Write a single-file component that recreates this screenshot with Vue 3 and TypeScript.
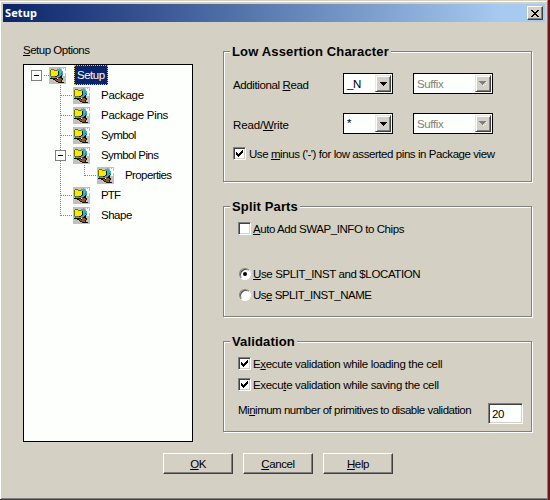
<script setup lang="ts">
import { ref } from 'vue'

interface TreeRow {
  label: string
  level: number
  spacing: string
  expander?: boolean
}

const rows: TreeRow[] = [
  { label: 'Setup', level: 0, spacing: 'tight', expander: true },
  { label: 'Package', level: 1, spacing: 'loose' },
  { label: 'Package Pins', level: 1, spacing: 'loose' },
  { label: 'Symbol', level: 1, spacing: 'tighter' },
  { label: 'Symbol Pins', level: 1, spacing: 'tighter', expander: true },
  { label: 'Properties', level: 2, spacing: 'tighter' },
  { label: 'PTF', level: 1, spacing: 'tightest' },
  { label: 'Shape', level: 1, spacing: 'tight' },
]

const selected = ref('Setup')
const swapInfo = ref(false)
const useMinus = ref(true)
const checkLoad = ref(true)
const checkSave = ref(true)
const splitMode = ref<'inst' | 'name'>('inst')

const palette: Record<string, string> = {
  K: '#15150c',
  O: '#787008',
  Y: '#f4ec08',
  T: '#38b4b4',
  D: '#187078',
  W: '#ffffff',
  B: '#806028',
  R: '#c03848',
}

const bitmap = [
  '.................',
  '..........T..W.W.',
  '..OOO...TTTT.WWW.',
  '.OYYYOOOTTTTTWWW.',
  '.OYYYYYYYKTTTTWWW',
  '.OYYYYYYYKTTTTWWW',
  '.OYYYYYYYKTTDTWW.',
  '.OYYYYYYYKTTTDWW.',
  '.OYYYYYYKDTTK.WW.',
  '.TOOOOKKTTTKK....',
  '..DTTTTTTDKKK....',
  '.KKKKKKKWRRBKK...',
  '....KKBBKBBBBK...',
  '......KBBBBBK....',
  '.......KKBBBK....',
  '.........KKKKKK..',
  '.................',
]

const pixels = bitmap.flatMap((line, y) =>
  [...line].flatMap((c, x) => (c === '.' ? [] : [{ x, y, fill: palette[c] }])),
)
</script>

<template>
  <div class="dialog">
    <header class="titlebar">
      <span>Setup</span>
      <button class="close" aria-label="Close">
        <svg width="8" height="7" shape-rendering="crispEdges">
          <path d="M0 0h2v1h1v1h2v-1h1v-1h2v1h-1v1h-1v1h-1v1h1v1h1v1h1v1h-2v-1h-1v-1h-2v1h-1v1h-2v-1h1v-1h1v-1h1v-1h-1v-1h-1v-1h-1z" />
        </svg>
      </button>
    </header>

    <main class="content">
      <section class="options">
        <div class="caption tight"><u>S</u>etup Options</div>
        <div class="tree">
          <svg class="lines" width="80" height="160" shape-rendering="crispEdges">
            <path d="M19.5 10.5H25M36.5 20V151M37 30.5H48M37 50.5H48M37 70.5H48M44 90.5H48M60.5 100V111M61 110.5H72M37 130.5H48M37 150.5H48" />
          </svg>
          <div v-for="row in rows" :key="row.label" class="row" :class="'level' + row.level">
            <span class="slot">
              <svg v-if="row.expander" class="expander" width="11" height="11" shape-rendering="crispEdges">
                <rect x=".5" y=".5" width="10" height="10" fill="#fff" stroke="#808080" />
                <path d="M3 5.5h5" stroke="#000" />
              </svg>
            </span>
            <svg class="icon" width="17" height="17" shape-rendering="crispEdges">
              <rect width="17" height="17" fill="#c0c0c0" />
              <rect v-for="p in pixels" :key="p.x + '-' + p.y" :x="p.x" :y="p.y" width="1" height="1" :fill="p.fill" />
            </svg>
            <span class="name" :class="[row.spacing, { selected: row.label === selected }]" @click="selected = row.label">{{ row.label }}</span>
          </div>
        </div>
      </section>

      <div class="groups">
        <section class="group assertion">
          <h2>Low Assertion Character</h2>
          <div class="pair">
            <span class="label">Additional <u>R</u>ead</span>
            <div class="combo"><span>_N</span><i class="drop"><svg width="7" height="4" shape-rendering="crispEdges"><path d="M0 0h7v1h-1v1h-1v1h-1v1h-1v-1h-1v-1h-1v-1h-1z" /></svg></i></div>
            <div class="combo wide"><span>Suffix</span><i class="drop"><svg width="8" height="5" shape-rendering="crispEdges"><path fill="#fff" d="M7 1h1v1h-1v1h-1v1h-1v1h-1v-1h3z" /><path fill="#808080" d="M0 0h7v1h-1v1h-1v1h-1v1h-1v-1h-1v-1h-1v-1h-1z" /></svg></i></div>
          </div>
          <div class="pair">
            <span class="label looser">Read/<u>W</u>rite</span>
            <div class="combo"><span class="star">*</span><i class="drop"><svg width="7" height="4" shape-rendering="crispEdges"><path d="M0 0h7v1h-1v1h-1v1h-1v1h-1v-1h-1v-1h-1v-1h-1z" /></svg></i></div>
            <div class="combo wide"><span>Suffix</span><i class="drop"><svg width="8" height="5" shape-rendering="crispEdges"><path fill="#fff" d="M7 1h1v1h-1v1h-1v1h-1v1h-1v-1h3z" /><path fill="#808080" d="M0 0h7v1h-1v1h-1v1h-1v1h-1v-1h-1v-1h-1v-1h-1z" /></svg></i></div>
          </div>
          <div class="check" @click="useMinus = !useMinus">
            <i class="box"><svg v-if="useMinus" width="7" height="7" shape-rendering="crispEdges"><path d="M0 2h1v1h1v1h1v-1h1v-1h1v-1h1v-1h1v3h-1v1h-1v1h-1v1h-1v1h-1v-1h-1v-1h-1z" /></svg></i>
            <span class="snug">Use <u>m</u>inus ('-') for low asserted pins in Package view</span>
          </div>
        </section>

        <section class="group split">
          <h2>Split Parts</h2>
          <div class="check" @click="swapInfo = !swapInfo">
            <i class="box"><svg v-if="swapInfo" width="7" height="7" shape-rendering="crispEdges"><path d="M0 2h1v1h1v1h1v-1h1v-1h1v-1h1v-1h1v3h-1v1h-1v1h-1v1h-1v1h-1v-1h-1v-1h-1z" /></svg></i>
            <span class="snug"><u>A</u>uto Add SWAP_INFO to Chips</span>
          </div>
          <div class="check radio first" @click="splitMode = 'inst'">
            <i class="dot" :class="{ on: splitMode === 'inst' }"></i>
            <span><u>U</u>se SPLIT_INST and $LOCATION</span>
          </div>
          <div class="check radio" @click="splitMode = 'name'">
            <i class="dot" :class="{ on: splitMode === 'name' }"></i>
            <span class="tight">Us<u>e</u> SPLIT_INST_NAME</span>
          </div>
        </section>

        <section class="group validation">
          <h2>Validation</h2>
          <div class="check" @click="checkLoad = !checkLoad">
            <i class="box"><svg v-if="checkLoad" width="7" height="7" shape-rendering="crispEdges"><path d="M0 2h1v1h1v1h1v-1h1v-1h1v-1h1v-1h1v3h-1v1h-1v1h-1v1h-1v1h-1v-1h-1v-1h-1z" /></svg></i>
            <span class="even">E<u>x</u>ecute validation while loading the cell</span>
          </div>
          <div class="check" @click="checkSave = !checkSave">
            <i class="box"><svg v-if="checkSave" width="7" height="7" shape-rendering="crispEdges"><path d="M0 2h1v1h1v1h1v-1h1v-1h1v-1h1v-1h1v3h-1v1h-1v1h-1v1h-1v1h-1v-1h-1v-1h-1z" /></svg></i>
            <span class="even">Execu<u>t</u>e validation while saving the cell</span>
          </div>
          <div class="minimum">
            <span class="tight">Mi<u>n</u>imum number of primitives to disable validation</span>
            <div class="field">20</div>
          </div>
        </section>
      </div>
    </main>

    <footer class="actions">
      <button class="tight"><span><u>O</u>K</span></button>
      <button><span><u>C</u>ancel</span></button>
      <button><span><u>H</u>elp</span></button>
    </footer>
  </div>
</template>

<style>
body {
  margin: 0;
  background: #701818;
}
</style>

<style scoped>
* {
  box-sizing: border-box;
}
.dialog {
  width: 548px;
  height: 500px;
  background: #d4d0c4;
  border-top: 1px solid #d4d0c4;
  border-right: 1px solid #808080;
  border-bottom: 1px solid #404040;
  box-shadow: inset 1px 1px #fff, inset 0 -1px #808080;
  padding: 3px 2px 0 3px;
  font: 11.5px/14px "Liberation Sans", sans-serif;
  letter-spacing: -0.38px;
  color: #000;
  white-space: nowrap;
  overflow: hidden;
}
svg {
  display: block;
  flex: none;
}
i {
  font-style: normal;
}
u {
  text-decoration: underline;
  text-decoration-thickness: 1px;
  text-underline-offset: 1px;
  text-decoration-skip-ink: none;
}
.titlebar {
  display: flex;
  align-items: center;
  justify-content: space-between;
  height: 18px;
  padding: 0 2px;
  background: linear-gradient(90deg, #0a246a, #a6caf0 92%);
  color: #fff;
  font: bold 11px/18px "Noto Sans", sans-serif;
  letter-spacing: 0.1px;
}
button {
  display: flex;
  align-items: center;
  justify-content: center;
  padding: 0;
  border: 1px solid;
  border-color: #fff #404040 #404040 #fff;
  border-radius: 0;
  background: #d4d0c4;
  box-shadow: inset -1px -1px #808080;
  font: inherit;
  letter-spacing: inherit;
  color: #000;
}
.looser { letter-spacing: -0.15px; }
.loose { letter-spacing: -0.27px; }
.even { letter-spacing: -0.33px; }
.snug { letter-spacing: -0.43px; }
.tight { letter-spacing: -0.49px; }
.tighter { letter-spacing: -0.6px; }
.tightest { letter-spacing: -0.9px; }
.close {
  width: 16px;
  height: 14px;
}
.content {
  display: flex;
  gap: 30px;
  padding: 21px 0 0 20px;
  height: 420px;
}
.options {
  width: 170px;
}
.caption {
  height: 21px;
}
.tree {
  position: relative;
  height: 378px;
  background: #fdfffc;
  border: 1px solid #000;
}
.lines {
  position: absolute;
  left: 0;
  top: 0;
  fill: none;
  stroke: #808080;
  stroke-dasharray: 1 1;
}
.row {
  position: relative;
  display: flex;
  align-items: center;
  height: 20px;
}
.level0 { padding-left: 7px; }
.level1 { padding-left: 31px; }
.level2 { padding-left: 55px; }
.slot {
  width: 18px;
}
.name {
  height: 20px;
  margin-left: 8px;
  padding: 0 3px;
  line-height: 20px;
}
.selected {
  width: 34px;
  background: #0a246a;
  color: #fff;
  outline: 1px dotted #d8c880;
  outline-offset: -1px;
}
.groups {
  width: 310px;
  padding-top: 8px;
}
.group {
  position: relative;
  border: 1px solid #808080;
  box-shadow: 1px 1px #fff, inset 1px 1px #fff;
  width: 309px;
}
h2 {
  position: absolute;
  left: 6px;
  top: -8px;
  margin: 0;
  padding: 0 2px;
  background: #d4d0c4;
  font: bold 13px/15px "Liberation Sans", sans-serif;
  letter-spacing: 0.15px;
}
.assertion {
  height: 131px;
  padding: 21px 0 0 9px;
}
.pair {
  display: flex;
  align-items: center;
  height: 21px;
  margin-bottom: 19px;
}
.label {
  width: 110px;
  padding-top: 3px;
}
.combo {
  display: flex;
  justify-content: space-between;
  width: 50px;
  height: 21px;
  padding: 1px 1px 1px 3px;
  border: 1px solid #000;
  background: #fdfffc;
  line-height: 18px;
}
.wide {
  width: 80px;
  margin-left: 20px;
  color: #808080;
}
.star {
  line-height: 17px;
}
.drop {
  display: flex;
  align-items: center;
  justify-content: center;
  width: 16px;
  height: 17px;
  background: #d4d0c4;
  border: 1px solid;
  border-color: #e8e6de #404040 #404040 #e8e6de;
  box-shadow: inset 1px 1px #fff, inset -1px -1px #808080;
}
.check {
  display: flex;
  align-items: center;
  gap: 2px;
  height: 13px;
}
.assertion .check {
  margin-top: -6px;
  gap: 3px;
}
.box {
  display: flex;
  align-items: center;
  justify-content: center;
  width: 13px;
  height: 13px;
  background: #fff;
  border: 1px solid;
  border-color: #808080 #fff #fff #808080;
  box-shadow: inset 1px 1px #404040, inset -1px -1px #d4d0c4;
}
.split {
  height: 111px;
  margin-top: 24px;
  padding: 15px 0 0 14px;
}
.radio {
  margin-top: 8px;
  padding-left: 1px;
}
.first {
  margin-top: 32px;
}
.dot {
  display: flex;
  align-items: center;
  justify-content: center;
  width: 12px;
  height: 12px;
  border: 1px solid;
  border-color: #808080 #fff #fff #808080;
  border-radius: 50%;
  background: #fff;
  box-shadow: inset 1px 1px #505050;
}
.on::after {
  content: "";
  width: 4px;
  height: 4px;
  border-radius: 50%;
  background: #000;
}
.validation {
  height: 91px;
  margin-top: 24px;
  padding: 15px 0 0 14px;
}
.validation .check {
  margin-bottom: 8px;
}
.minimum {
  display: flex;
  justify-content: space-between;
  padding: 4px 8px 0 0;
}
.field {
  width: 35px;
  height: 21px;
  padding: 1px 3px;
  border: 1px solid;
  border-color: #808080 #fff #fff #808080;
  background: #fdfffc;
  box-shadow: inset 1px 1px #404040, inset -1px -1px #d4d0c4;
  line-height: 18px;
}
.actions {
  display: flex;
  gap: 10px;
  padding: 11px 0 0 160px;
}
.actions button {
  width: 70px;
  height: 21px;
}
</style>
